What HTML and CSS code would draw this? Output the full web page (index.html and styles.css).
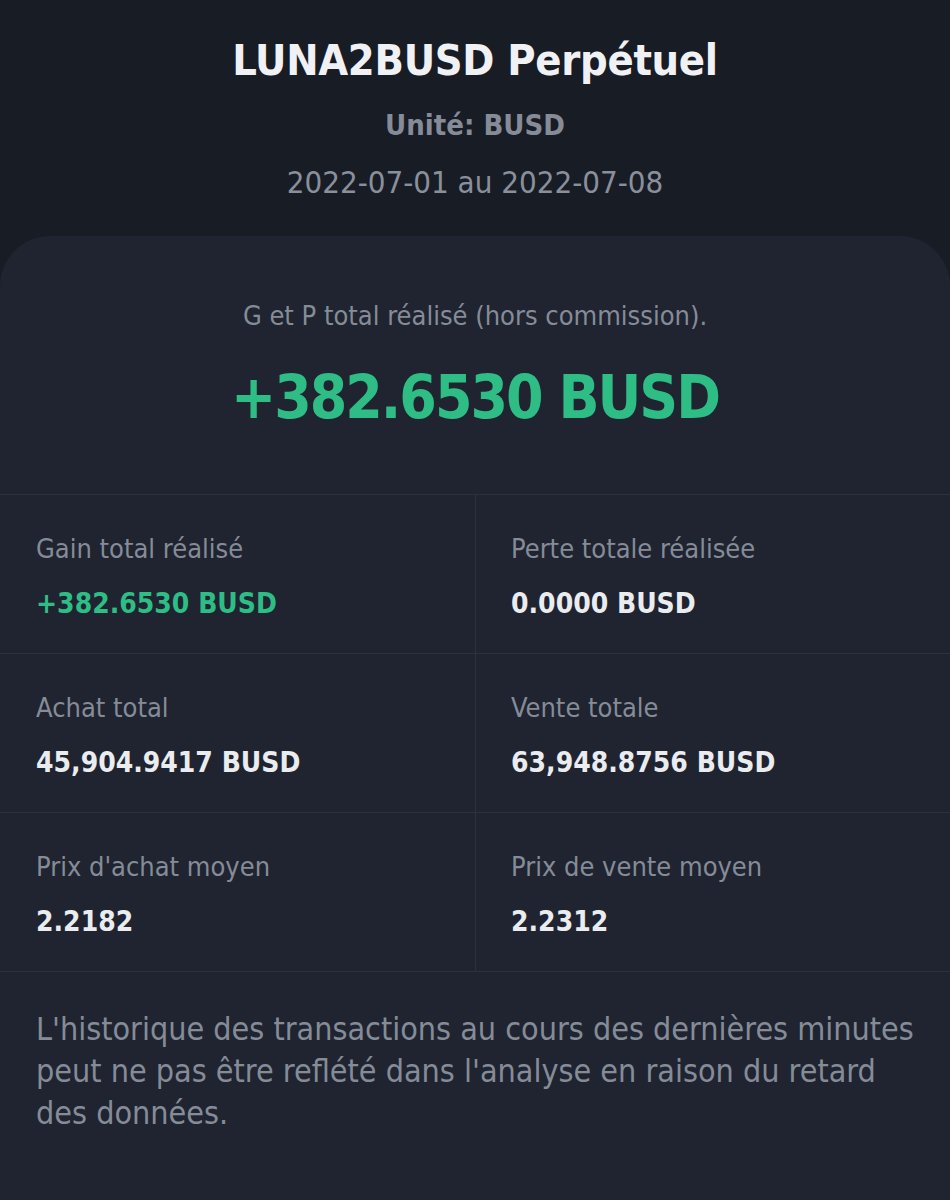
FILE: index.html
```html
<!DOCTYPE html>
<html>
<head>
  <meta charset="utf-8">
  <link rel="stylesheet" href="styles.css">
</head>
<body>
  <div class="header">
    <h1 class="title">LUNA2BUSD Perpétuel</h1>
    <div class="unit">Unité: BUSD</div>
    <div class="period">2022-07-01 au 2022-07-08</div>
  </div>

  <div class="card">
    <div class="summary">
      <p class="summary-label">G et P total réalisé (hors commission).</p>
      <p class="summary-value">+382.6530 BUSD</p>
    </div>

    <div class="stats-grid">
      <div class="stat">
        <p class="stat-label">Gain total réalisé</p>
        <p class="stat-value green">+382.6530 BUSD</p>
      </div>
      <div class="stat">
        <p class="stat-label">Perte totale réalisée</p>
        <p class="stat-value">0.0000 BUSD</p>
      </div>
      <div class="stat">
        <p class="stat-label">Achat total</p>
        <p class="stat-value">45,904.9417 BUSD</p>
      </div>
      <div class="stat">
        <p class="stat-label">Vente totale</p>
        <p class="stat-value">63,948.8756 BUSD</p>
      </div>
      <div class="stat">
        <p class="stat-label">Prix d'achat moyen</p>
        <p class="stat-value">2.2182</p>
      </div>
      <div class="stat">
        <p class="stat-label">Prix de vente moyen</p>
        <p class="stat-value">2.2312</p>
      </div>
    </div>

    <p class="note">L'historique des transactions au cours des dernières minutes peut ne pas être reflété dans l'analyse en raison du retard des données.</p>
  </div>
</body>
</html>
```

FILE: styles.css
```css
body {
  margin: 0;
  background-color: #181c25;
  font-family: "DejaVu Sans Condensed", "DejaVu Sans", sans-serif;
  font-stretch: condensed;
  color: #eaecef;
}

p {
  margin: 0;
}

.header {
  display: flex;
  flex-direction: column;
  align-items: center;
  padding-top: 36px;
  padding-bottom: 36px;
}

.title {
  margin: 0;
  font-size: 43px;
  line-height: 48px;
  font-weight: bold;
  letter-spacing: -0.3px;
  color: #f0f1f4;
}

.unit {
  margin-top: 23px;
  font-size: 29px;
  line-height: 36px;
  font-weight: bold;
  color: #868c97;
}

.period {
  margin-top: 21px;
  font-size: 31px;
  line-height: 36px;
  color: #8a909b;
}

.card {
  background-color: #1f2430;
  border-radius: 50px 50px 0 0;
  min-height: 964px;
}

.summary {
  display: flex;
  flex-direction: column;
  align-items: center;
  gap: 30px;
  padding: 64px 0 62px;
}

.summary-label {
  font-size: 27px;
  line-height: 32px;
  color: #858c98;
}

.summary-value {
  font-size: 60px;
  line-height: 70px;
  font-weight: bold;
  letter-spacing: -2px;
  color: #2ebd85;
}

.stats-grid {
  display: grid;
  grid-template-columns: 476px 1fr;
  border-top: 1px solid #2c313b;
}

.stat {
  display: flex;
  flex-direction: column;
  gap: 22px;
  height: 159px;
  box-sizing: border-box;
  padding: 38px 0 0 36px;
  border-bottom: 1px solid #2c313b;
}

.stat:nth-child(odd) {
  border-right: 1px solid #2c313b;
}

.stat:nth-child(even) {
  padding-left: 35px;
}

.stat-label {
  font-size: 27px;
  line-height: 32px;
  color: #858c98;
}

.stat-value {
  font-size: 28px;
  line-height: 34px;
  font-weight: bold;
  color: #eaecef;
}

.stat-value.green {
  color: #2ebd85;
}

.note {
  padding: 36px 25px 0 36px;
  font-size: 32px;
  line-height: 42px;
  color: #858c98;
}
```
